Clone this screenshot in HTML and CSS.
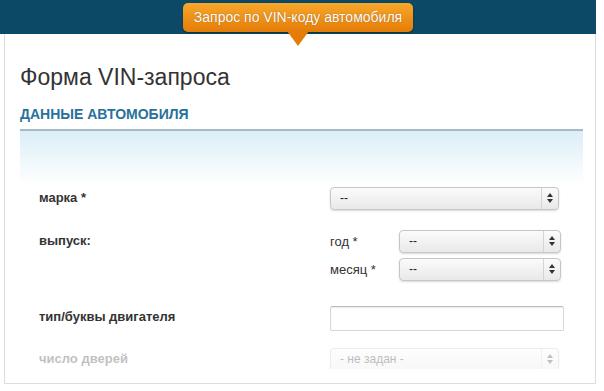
FILE: index.html
```html
<!DOCTYPE html>
<html lang="ru">
<head>
    <meta charset="UTF-8">
    <meta name="viewport" content="width=device-width, initial-scale=1.0">
    <title>Форма VIN-запроса</title>
    <link rel="stylesheet" href="styles.css">
</head>
<body>
    <div class="page">
        <div class="topbar">
            <div class="tab">Запрос по VIN-коду автомобиля</div>
        </div>

        <div class="card">
            <h1>Форма VIN-запроса</h1>
            <h2>ДАННЫЕ АВТОМОБИЛЯ</h2>
            <div class="section-glow"></div>

            <div class="form-row first">
                <div class="label">марка *</div>
                <div class="select wide"><span>--</span><i class="arrows"></i></div>
            </div>

            <div class="form-row release">
                <div class="label">выпуск:</div>
                <div class="sub-fields">
                    <div class="sub-row">
                        <span class="sub-label">год *</span>
                        <div class="select short"><span>--</span><i class="arrows"></i></div>
                    </div>
                    <div class="sub-row">
                        <span class="sub-label">месяц *</span>
                        <div class="select short"><span>--</span><i class="arrows"></i></div>
                    </div>
                </div>
            </div>

            <div class="form-row engine">
                <div class="label">тип/буквы двигателя</div>
                <input type="text" class="text-input">
            </div>

            <div class="form-row disabled">
                <div class="label">число дверей</div>
                <div class="select wide"><span>- не задан -</span><i class="arrows"></i></div>
            </div>
            <div class="bottom-fade"></div>
        </div>
    </div>
</body>
</html>
```

FILE: styles.css
```css
body {
    margin: 0;
    background-color: #fff;
    font-family: 'Liberation Sans', Arial, sans-serif;
    color: #333;
}

.page {
    width: 596px;
    height: 391px;
    overflow: hidden;
}

.topbar {
    position: relative;
    height: 34px;
    background-color: #0c4966;
    display: flex;
    justify-content: center;
    align-items: flex-start;
}

.tab {
    position: relative;
    width: 230px;
    height: 29px;
    margin-top: 3px;
    box-sizing: border-box;
    border-radius: 5px;
    background: linear-gradient(#f7a82a, #e47c07);
    color: #fff;
    font-size: 14px;
    line-height: 28px;
    text-align: center;
    text-shadow: 0 0 1px rgba(120, 60, 0, 0.7);
    box-shadow: 0 1px 2px rgba(0, 0, 0, 0.35);
}

/* little pointer under the tab */
.tab::after {
    content: '';
    position: absolute;
    left: 50%;
    top: 28px;
    margin-left: -11px;
    border-left: 11px solid transparent;
    border-right: 11px solid transparent;
    border-top: 15px solid #e47c07;
    z-index: 2;
}

.card {
    position: relative;
    margin-left: 4px;
    height: 350px;
    box-sizing: border-box;
    border: 1px solid #ddd;
    border-top: none;
    padding: 0 12px 0 15px;
    overflow: hidden;
}

.card h1 {
    margin: 29px 0 0;
    font-size: 23px;
    font-weight: normal;
    line-height: 28px;
    color: #333;
}

.card h2 {
    margin: 15px 0 0;
    padding-bottom: 6px;
    font-size: 14px;
    line-height: 17px;
    color: #28719a;
    border-bottom: 2px solid #a7b9c4;
}

.section-glow {
    height: 54px;
    background: linear-gradient(#dbeef8, #fff);
}

.form-row {
    display: flex;
    align-items: flex-start;
    padding-left: 19px;
}

.form-row .label {
    width: 291px;
    font-size: 13px;
    font-weight: bold;
    line-height: 22px;
    color: #333;
}

.form-row.first {
    margin-top: 2px;
}

.release {
    margin-top: 20px;
}

.engine {
    margin-top: 25px;
}

.disabled {
    margin-top: 17px;
    opacity: 0.3;
}

.sub-fields {
    display: flex;
    flex-direction: column;
    gap: 5px;
}

.sub-row {
    display: flex;
    align-items: center;
}

.sub-label {
    width: 69px;
    font-size: 13px;
    line-height: 23px;
}

.select {
    position: relative;
    height: 23px;
    box-sizing: border-box;
    border: 1px solid #c6c6c6;
    border-radius: 4px;
    background: linear-gradient(#fbfbfb, #e9e9e9);
    box-shadow: 0 1px 2px rgba(0, 0, 0, 0.15);
    font-size: 12px;
    line-height: 21px;
    padding-left: 9px;
    color: #222;
}

.select.wide {
    width: 229px;
}

.select.short {
    width: 162px;
}

.select .arrows {
    position: absolute;
    top: 0;
    right: 0;
    width: 16px;
    height: 100%;
    border-left: 1px solid #d4d4d4;
}

.select .arrows::before,
.select .arrows::after {
    content: '';
    position: absolute;
    left: 5px;
    border-left: 3px solid transparent;
    border-right: 3px solid transparent;
}

.select .arrows::before {
    top: 5px;
    border-bottom: 4px solid #333;
}

.select .arrows::after {
    top: 11px;
    border-top: 4px solid #333;
}

.text-input {
    width: 234px;
    height: 25px;
    margin: 0;
    box-sizing: border-box;
    border: 1px solid #d6d6d6;
    border-top-color: #bdbdbd;
    border-radius: 2px;
    box-shadow: inset 0 1px 1px rgba(0, 0, 0, 0.08);
    outline: 0;
}

/* fades the last row out at the bottom of the card */
.bottom-fade {
    position: absolute;
    left: 0;
    right: 0;
    bottom: 0;
    height: 14px;
    background: #fff;
}
```
